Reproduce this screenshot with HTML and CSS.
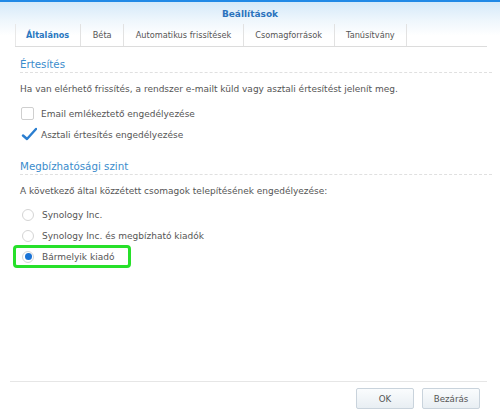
FILE: index.html
```html
<!DOCTYPE html>
<html lang="hu">
<head>
	<meta charset="UTF-8">
	<title>Beállítások</title>
	<link rel="stylesheet" href="styles.css">
</head>
<body>
	<div class="window">
		<div class="top">
			<div class="header">Beállítások</div>
			<div class="tabs">
				<div class="tab active">Általános</div>
				<div class="tab">Béta</div>
				<div class="tab">Automatikus frissítések</div>
				<div class="tab">Csomagforrások</div>
				<div class="tab">Tanúsítvány</div>
			</div>
		</div>
		<div class="content">
			<div class="section_title">Értesítés</div>
			<p class="desc">Ha van elérhető frissítés, a rendszer e-mailt küld vagy asztali értesítést jelenít meg.</p>
			<div class="row"><span class="check"></span>Email emlékeztető engedélyezése</div>
			<div class="row"><span class="check checked"><svg width="16" height="14" viewBox="0 0 16 14"><path d="M2 8.5 L6 12 L15 2" fill="none" stroke="#2a7ed0" stroke-width="2.4" stroke-linecap="round" stroke-linejoin="round"/></svg></span>Asztali értesítés engedélyezése</div>

			<div class="section_title second">Megbízhatósági szint</div>
			<p class="desc">A következő által közzétett csomagok telepítésének engedélyezése:</p>
			<div class="row"><span class="radio"></span>Synology Inc.</div>
			<div class="row"><span class="radio"></span>Synology Inc. és megbízható kiadók</div>
			<div class="row highlight"><span class="radio on"></span>Bármelyik kiadó</div>
		</div>
		<div class="footer">
			<button class="btn">OK</button>
			<button class="btn">Bezárás</button>
		</div>
	</div>
</body>
</html>
```

FILE: styles.css
```css
*{box-sizing: border-box;}
html,body{margin:0;height:100%;overflow:hidden;background:#fff;}
body{font-family:"DejaVu Sans","Liberation Sans",sans-serif;font-size:9px;color:#555;}
.window{display:flex;flex-direction:column;height:414px;border-top:2px solid #2189e6;}
.top{background:linear-gradient(#d4e9f9,#eef6fc 40%,#fff 75%);}
.header{height:22px;padding-top:3px;line-height:19px;text-align:center;font-weight:bold;font-size:9px;color:#2b73bd;}
.tabs{display:flex;margin:0 13px 0 15px;height:23px;border-bottom:1px solid #dcdcdc;font-size:8.2px;}
.tab{padding:0 11.5px;line-height:22px;border-right:1px solid #e2e2e2;}
.tab:first-child{border-left:1px solid #e8e8e8;padding:0 11px 0 10px;}
.tab.active{color:#2b78c1;font-weight:bold;}
.content{flex:1;padding:0 13px 0 20px;}
.section_title{margin:11px -5px 0 0;padding-bottom:2px;line-height:12px;font-size:10.3px;color:#3a8ccc;border-bottom:1px dashed #e0e0e0;}
.section_title.second{margin-top:15px;}
.desc{margin:10px 0 8px 0;line-height:12px;}
.desc + .row .radio, .radio{margin:0 8px 0 2px;}
.section_title.second + .desc{margin-bottom:7px;}
.row{display:flex;align-items:center;height:21px;}
.check{width:13px;height:13px;margin:0 7px 0 1px;border:1px solid #cfcfcf;border-radius:2px;background:#fff;display:flex;align-items:center;justify-content:center;}
.check.checked{border-color:transparent;}
.check svg{flex:none;margin:-2px -2px 0 0;}
.radio{width:12px;height:12px;border:1px solid #d4d4d4;border-radius:50%;background:#fff;display:flex;align-items:center;justify-content:center;}
.radio.on::after{content:"";width:7px;height:7px;border-radius:50%;background:#1a73d6;}
.highlight{width:118px;height:23px;margin:-1px 0 0 -7px;padding-left:4px;border:3px solid #27e02a;border-radius:4px;}
.footer{display:flex;justify-content:flex-end;gap:8px;margin:0 13px 0 10px;padding:6px 7px 6px 0;height:33px;border-top:1px solid #e6e6e6;}
.btn{width:58px;height:21px;padding:0;font-family:inherit;font-size:8.7px;color:#555;border:1px solid #c9d3dc;border-radius:2px;background:linear-gradient(#fafcfd,#e8eef3);}
```
